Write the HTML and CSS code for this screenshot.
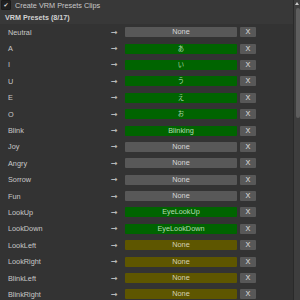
FILE: index.html
```html
<!DOCTYPE html>
<html lang="en">
<head>
  <meta charset="UTF-8">
  <title>VRM Presets</title>
  <link rel="stylesheet" href="styles.css">
</head>
<body>
  <div class="window">
    <div class="content">
      <label class="toggle">
        <span class="check">✔</span>
        <span>Create VRM Presets Clips</span>
      </label>
      <div class="title">VRM Presets (8/17)</div>
      <div class="list">
        <div class="row"><span class="name">Neutral</span><span class="arrow">→</span><span class="field">None</span><span class="clear">X</span></div>
        <div class="row"><span class="name">A</span><span class="arrow">→</span><span class="field set jp">あ</span><span class="clear">X</span></div>
        <div class="row"><span class="name">I</span><span class="arrow">→</span><span class="field set jp">い</span><span class="clear">X</span></div>
        <div class="row"><span class="name">U</span><span class="arrow">→</span><span class="field set jp">う</span><span class="clear">X</span></div>
        <div class="row"><span class="name">E</span><span class="arrow">→</span><span class="field set jp">え</span><span class="clear">X</span></div>
        <div class="row"><span class="name">O</span><span class="arrow">→</span><span class="field set jp">お</span><span class="clear">X</span></div>
        <div class="row"><span class="name">Blink</span><span class="arrow">→</span><span class="field set">Blinking</span><span class="clear">X</span></div>
        <div class="row"><span class="name">Joy</span><span class="arrow">→</span><span class="field">None</span><span class="clear">X</span></div>
        <div class="row"><span class="name">Angry</span><span class="arrow">→</span><span class="field">None</span><span class="clear">X</span></div>
        <div class="row"><span class="name">Sorrow</span><span class="arrow">→</span><span class="field">None</span><span class="clear">X</span></div>
        <div class="row"><span class="name">Fun</span><span class="arrow">→</span><span class="field">None</span><span class="clear">X</span></div>
        <div class="row"><span class="name">LookUp</span><span class="arrow">→</span><span class="field set">EyeLookUp</span><span class="clear">X</span></div>
        <div class="row"><span class="name">LookDown</span><span class="arrow">→</span><span class="field set">EyeLookDown</span><span class="clear">X</span></div>
        <div class="row"><span class="name">LookLeft</span><span class="arrow">→</span><span class="field warn">None</span><span class="clear">X</span></div>
        <div class="row"><span class="name">LookRight</span><span class="arrow">→</span><span class="field warn">None</span><span class="clear">X</span></div>
        <div class="row"><span class="name">BlinkLeft</span><span class="arrow">→</span><span class="field warn">None</span><span class="clear">X</span></div>
        <div class="row"><span class="name">BlinkRight</span><span class="arrow">→</span><span class="field warn">None</span><span class="clear">X</span></div>
      </div>
    </div>
    <div class="scrollbar">
      <span class="up"></span>
      <span class="thumb"></span>
    </div>
  </div>
</body>
</html>
```
FILE: styles.css
```css
body {
  margin: 0;
  background: #383838;
  color: #c8c8c8;
  font-family: "Liberation Sans", Arial, sans-serif;
  font-size: 7.3px;
  overflow: hidden;
}
.window {
  display: flex;
  height: 300px;
}
.content {
  flex: 1;
  overflow: hidden;
}
.toggle {
  display: flex;
  align-items: center;
  gap: 4px;
  height: 10px;
  padding-left: 1px;
}
.check {
  width: 8px;
  height: 8px;
  margin-top: -1px;
  background: #202020;
  border: 1px solid #1a1a1a;
  border-radius: 1px;
  color: #d8d8d8;
  font-size: 6px;
  line-height: 8px;
  text-align: center;
  font-family: "DejaVu Sans", sans-serif;
}
.title {
  height: 14px;
  line-height: 16px;
  padding-left: 5px;
  font-weight: bold;
  font-size: 7.2px;
  color: #d2d2d2;
}
.list {
  background: #333333;
}
.row {
  display: flex;
  align-items: center;
  height: 16.4px;
  padding-left: 8px;
}
.name {
  width: 103px;
}
.arrow {
  width: 6px;
  margin-right: 8px;
  font-family: "DejaVu Sans", sans-serif;
  font-size: 8px;
  font-weight: bold;
  color: #b8b8b8;
}
.field {
  width: 112px;
  height: 10px;
  line-height: 10px;
  text-align: center;
  background: #585858;
  color: #d6d6d6;
  border-radius: 1px;
}
.field.jp {
  font-family: "Noto Sans CJK JP", sans-serif;
  font-size: 6.3px;
}
.field.set {
  background: #006400;
  color: #b4dcb0;
}
.field.warn {
  background: #5e5600;
  color: #d6d2b4;
}
.clear {
  width: 16px;
  height: 10px;
  line-height: 10px;
  margin-left: 3px;
  text-align: center;
  background: #585858;
  color: #e0e0e0;
  border-radius: 1px;
}
.scrollbar {
  width: 6px;
  border-left: 1px solid #2a2a2a;
  background: #3e3e3e;
}
.up {
  display: block;
  width: 0;
  height: 0;
  margin: 2px auto 0;
  border-left: 2px solid transparent;
  border-right: 2px solid transparent;
  border-bottom: 3px solid #c8c8c8;
}
.thumb {
  display: block;
  width: 4px;
  height: 110px;
  margin: 3px 0 0 2px;
  background: #5e5e5e;
  border-radius: 2px;
}
```
